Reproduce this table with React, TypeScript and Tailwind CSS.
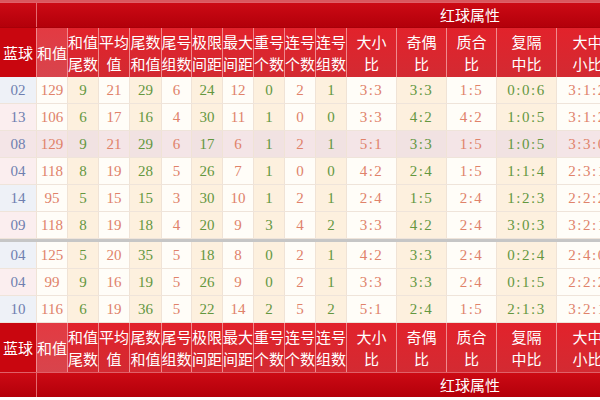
import React from 'react';

const W = ["w-[37px]", "w-[31px]", "w-[31px]", "w-[31px]", "w-[32px]", "w-[30px]", "w-[31px]", "w-[31px]", "w-[31px]", "w-[31px]", "w-[31px]", "w-[50px]", "w-[50px]", "w-[50px]", "w-[60px]", "w-[62px]"];

const HEAD: string[][] = [
    ["蓝球"], ["和值"], ["和值", "尾数"], ["平均", "值"], ["尾数", "和值"], ["尾号", "组数"], ["极限", "间距"],
    ["最大", "间距"], ["重号", "个数"], ["连号", "个数"], ["连号", "组数"], ["大小", "比"], ["奇偶", "比"],
    ["质合", "比"], ["复隔", "中比"], ["大中", "小比"],
];

const TOP_ROWS = [
    ["02", "129", "9", "21", "29", "6", "24", "12", "0", "2", "1", "3:3", "3:3", "1:5", "0:0:6", "3:1:2"],
    ["13", "106", "6", "17", "16", "4", "30", "11", "1", "0", "0", "3:3", "4:2", "4:2", "1:0:5", "3:1:2"],
    ["08", "129", "9", "21", "29", "6", "17", "6", "1", "2", "1", "5:1", "3:3", "1:5", "1:0:5", "3:3:0"],
    ["04", "118", "8", "19", "28", "5", "26", "7", "1", "0", "0", "4:2", "2:4", "1:5", "1:1:4", "2:3:1"],
    ["14", "95", "5", "15", "15", "3", "30", "10", "1", "2", "1", "2:4", "1:5", "2:4", "1:2:3", "2:2:2"],
    ["09", "118", "8", "19", "18", "4", "20", "9", "3", "4", "2", "3:3", "4:2", "2:4", "3:0:3", "3:2:1"],
];

const BOTTOM_ROWS = [
    ["04", "125", "5", "20", "35", "5", "18", "8", "0", "2", "1", "4:2", "3:3", "2:4", "0:2:4", "2:4:0"],
    ["04", "99", "9", "16", "19", "5", "26", "9", "0", "2", "1", "3:3", "3:3", "2:4", "0:1:5", "2:2:2"],
    ["10", "116", "6", "19", "36", "5", "22", "14", "2", "5", "2", "5:1", "2:4", "1:5", "2:1:3", "3:2:1"],
];

const Band = () => (
    <div className="flex h-[25px] bg-linear-to-b from-[#cc0a14] to-[#b3000a] border-t border-[#e06068]">
        <div className={`${W[0]} shrink-0 border-r border-[#e46a70]`}></div>
        <div className="w-[866px] shrink-0 flex items-center justify-center text-[15px] text-white">红球属性</div>
    </div>
);

const Header = ({ h }: { h: string }) => (
    <div className={`flex ${h}`}>
        {HEAD.map((lines, i) => (
            <div
                key={i}
                className={`${W[i]} shrink-0 flex flex-col items-center justify-center whitespace-nowrap border-r border-[#ef8a8e] text-[15px] leading-[22px] text-white ${i === 0 ? "bg-[#c9060f]" : i === 1 ? "bg-linear-to-b from-[#e33a42] to-[#d8444c]" : "bg-linear-to-b from-[#e2222b] to-[#d32a32]"}`}
            >
                {lines.map((t) => <span key={t}>{t}</span>)}
            </div>
        ))}
    </div>
);

const DataRow = ({ row, idx, hl }: { row: string[]; idx: number; hl?: boolean }) => (
    <div className="flex h-[27px] border-b border-[#efe4da]">
        {row.map((v, i) => {
            let bg = "bg-[#fffdf8]";
            let color = "text-[#e0826a]";
            if (i === 0) {
                bg = idx % 2 === 0 ? "bg-[#eef1f7]" : "bg-[#fbeeef]";
                color = "text-[#6f7fb0]";
            } else if (i % 2 === 0) {
                bg = "bg-[#fdf0de]";
                color = "text-[#64973f]";
            }
            if (hl) bg = i % 2 === 0 && i > 0 ? "bg-[#f1e2e2]" : "bg-[#f4e5e7]";
            return (
                <div key={i} className={`${W[i]} shrink-0 flex items-center justify-center whitespace-nowrap border-r border-[#f0e3d6] ${bg} ${color} ${i > 10 ? "tracking-[1.5px]" : ""}`}>
                    {v}
                </div>
            );
        })}
    </div>
);

export default function App() {
    return (
        <div className="w-[600px] h-[400px] overflow-hidden bg-white" style={{ fontFamily: '"Noto Sans CJK SC", sans-serif' }}>
            <div className="w-[900px]">
                <div className="h-[2px] bg-[#d9585e]"></div>
                <Band />
                <Header h="h-[50px] border-t border-[#a80008]" />
                <div className="text-[15px]" style={{ fontFamily: '"Liberation Serif", serif' }}>
                    {TOP_ROWS.map((r, i) => (
                        <DataRow key={i} row={r} idx={i} hl={i === 2} />
                    ))}
                    <div className="h-[3px] bg-[#c6c6c6]"></div>
                    {BOTTOM_ROWS.map((r, i) => (
                        <DataRow key={i} row={r} idx={i} />
                    ))}
                </div>
                <Header h="h-[49px]" />
                <Band />
            </div>
        </div>
    );
}
